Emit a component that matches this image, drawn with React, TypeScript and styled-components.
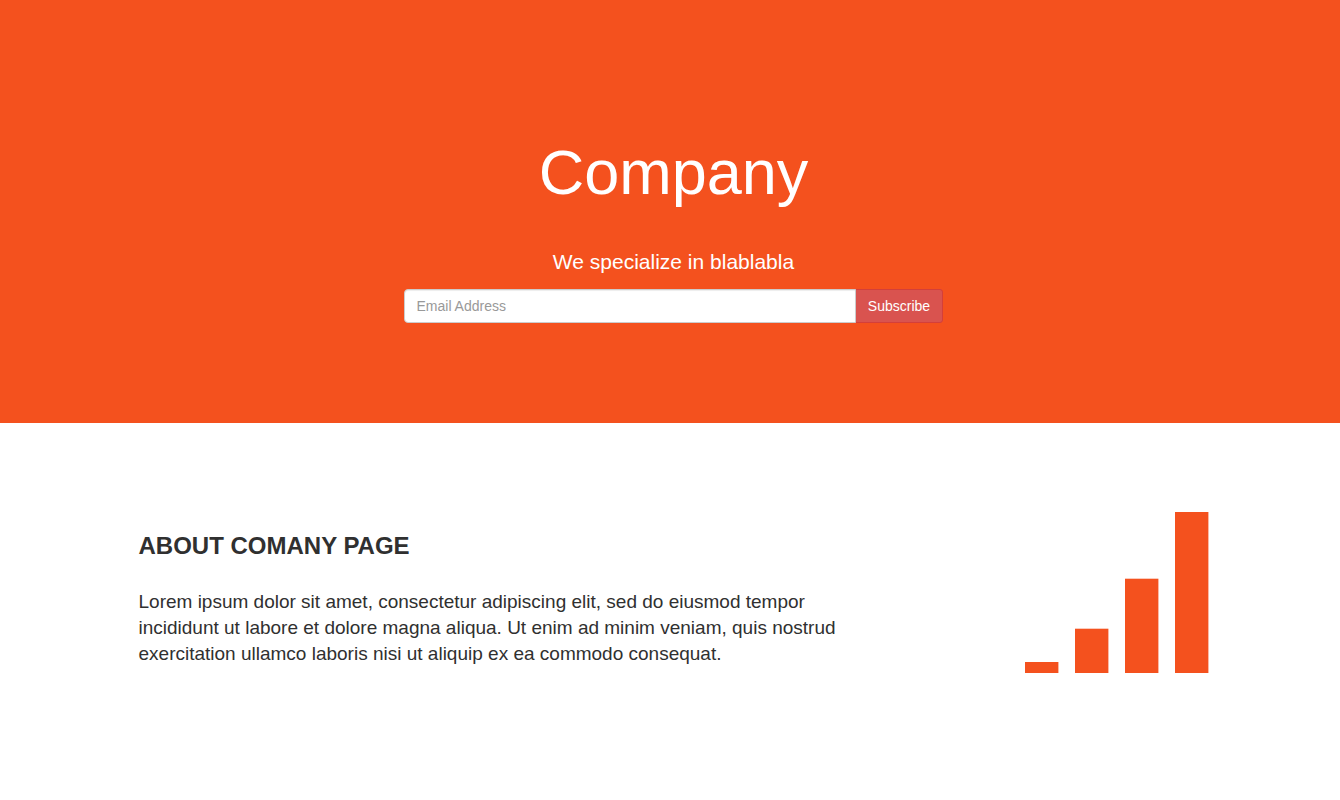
import React from "react";
import styled, { createGlobalStyle } from "styled-components";

const GlobalStyle = createGlobalStyle`
  *, *::before, *::after { box-sizing: border-box; }
  html { overflow: hidden; }
  body {
    margin: 0;
    font-family: "Liberation Sans", Arial, sans-serif;
    font-size: 14px;
    line-height: 1.42857143;
    color: #303030;
    background: #fff;
  }
`;

const Jumbotron = styled.header`
  height: 423px;
  padding: 134px 25px 100px 32px;
  background: #f4511e;
  color: #fff;
  text-align: center;
`;

const Brand = styled.h1`
  margin: 0;
  font-size: 63px;
  font-weight: 400;
  line-height: 77px;
`;

const Tagline = styled.p`
  margin: 36px 0 12px;
  font-size: 21px;
  line-height: 30px;
`;

const SubscribeForm = styled.form`
  display: flex;
  width: 539px;
  margin: 0 auto;
`;

const EmailInput = styled.input`
  position: relative;
  z-index: 1;
  flex: 1;
  height: 34px;
  padding: 6px 12px 6px 11.5px;
  border: 1px solid #ccc;
  border-radius: 4px 0 0 4px;
  background: #fff;
  box-shadow: inset 0 1px 1px rgba(0, 0, 0, 0.075);
  color: #555;
  font: inherit;
  &::placeholder { color: #999; opacity: 1; }
`;

const SubscribeButton = styled.button`
  height: 34px;
  width: 88px;
  margin-left: -1px;
  padding: 6px 0;
  border: 1px solid #d43f3a;
  border-radius: 0 3px 3px 0;
  background: #d9534f;
  color: #fff;
  font: inherit;
`;

const About = styled.section`
  display: flex;
  justify-content: space-between;
  padding: 89px 131px 0 138.5px;
`;

const AboutText = styled.div`
  width: 720px;
`;

const AboutTitle = styled.h2`
  margin: 17px 0 26px;
  font-size: 24px;
  font-weight: 700;
  line-height: 34px;
  text-transform: uppercase;
  color: #303030;
`;

const AboutBody = styled.p`
  margin: 0;
  font-size: 19px;
  line-height: 26px;
`;

const SignalIcon = styled.svg`
  display: block;
  fill: #f4511e;
`;

export default function App() {
  return (
    <>
      <GlobalStyle />
      <Jumbotron>
        <Brand>Company</Brand>
        <Tagline>We specialize in blablabla</Tagline>
        <SubscribeForm>
          <EmailInput type="email" placeholder="Email Address" />
          <SubscribeButton type="button">Subscribe</SubscribeButton>
        </SubscribeForm>
      </Jumbotron>
      <About>
        <AboutText>
          <AboutTitle>About Comany Page</AboutTitle>
          <AboutBody>
            Lorem ipsum dolor sit amet, consectetur adipiscing elit, sed do eiusmod tempor incididunt
            ut labore et dolore magna aliqua. Ut enim ad minim veniam, quis nostrud exercitation
            ullamco laboris nisi ut aliquip ex ea commodo consequat.
          </AboutBody>
        </AboutText>
        <SignalIcon width="184" height="161" viewBox="0 0 184 161">
          <rect x="0" y="150" width="33.4" height="11" />
          <rect x="50" y="116.7" width="33.4" height="44.3" />
          <rect x="100" y="66.7" width="33.4" height="94.3" />
          <rect x="150" y="0" width="33.4" height="161" />
        </SignalIcon>
      </About>
    </>
  );
}
